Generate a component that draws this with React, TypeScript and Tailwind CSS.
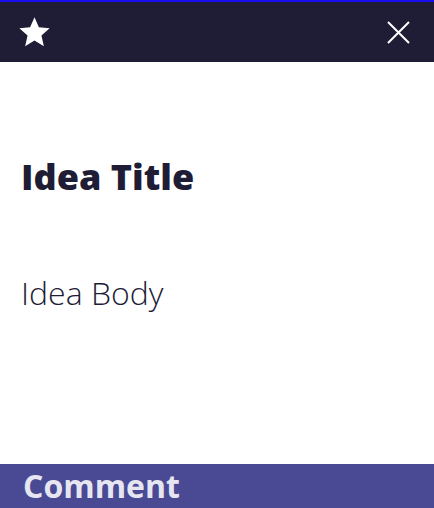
import * as React from "react";

export default function App() {
  return (
    <div className="w-[434px] h-[508px] flex flex-col bg-white overflow-hidden font-['Open_Sans',sans-serif]">
      <header className="h-[62px] shrink-0 border-t-2 border-[#1a0df0] bg-[#1f1d36] flex items-center justify-between pl-[17px] pr-[24px]">
        <svg width="35" height="34" viewBox="0 0 24 24" fill="#ffffff">
          <path d="M12 1.5l3.1 7.1 7.6.7-5.8 5.1 1.7 7.6L12 18l-6.6 4 1.7-7.6L1.3 9.3l7.6-.7z" />
        </svg>
        <svg width="23" height="23" viewBox="0 0 23 23" stroke="#ffffff" strokeWidth="2" fill="none">
          <path d="M1 1l21 21M22 1L1 22" />
        </svg>
      </header>
      <main className="flex-1 px-[21px]">
        <h1 className="mt-[93px] text-[36px] leading-[44px] font-extrabold text-[#1f1d36]">Idea Title</h1>
        <p className="mt-[73px] text-[32px] leading-[42px] font-light text-[#1f1d36]">Idea Body</p>
      </main>
      <footer className="h-[44px] shrink-0 bg-[#4a4a94] px-[23px]">
        <span className="block text-[32px] leading-[44px] font-bold text-[#e6e6f2]">Comment</span>
      </footer>
    </div>
  );
}
